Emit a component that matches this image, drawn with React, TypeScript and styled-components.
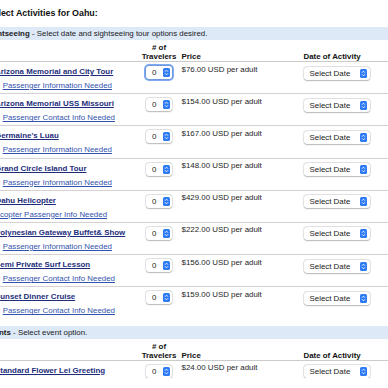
import React from "react";
import styled, { createGlobalStyle, css } from "styled-components";

const GlobalStyle = createGlobalStyle`
  html, body {
    margin: 0;
    padding: 0;
    background: #ffffff;
    overflow: hidden;
  }
  body {
    font-family: "Liberation Sans", Arial, Helvetica, sans-serif;
    color: #1a1a1a;
  }
`;

const Page = styled.div`
  margin-left: -16px;
  width: 440px;
`;

const Heading = styled.h1`
  margin: 0;
  padding: 8px 0 8px 3.6px;
  font-size: 8.9px;
  line-height: 11px;
  font-weight: 700;
  color: #111;
`;

const Section = styled.section`
  & + & {
    margin-top: 7.4px;
  }
`;

const Bar = styled.div`
  height: 13px;
  line-height: 13px;
  padding-left: 1px;
  background-color: #dee9f8;
  font-size: 7.9px;
  color: #1a1a1a;

  b {
    font-weight: 700;
  }
`;

const Grid = styled.div`
  display: grid;
  grid-template-columns: 157px 36px 123px 1fr;
`;

const HeaderRow = styled(Grid)`
  height: 21px;
  align-items: end;
  border-bottom: 1px solid #cbcbcb;
  font-size: 7.9px;
  font-weight: 700;
  line-height: 9px;
  color: #111;
`;

const HeadCell = styled.div<{ $center?: boolean; $pad?: number }>`
  text-align: ${(p) => (p.$center ? "center" : "left")};
  padding-left: ${(p) => p.$pad ?? 0}px;
  white-space: nowrap;
`;

const Row = styled(Grid)`
  border-bottom: 1px solid #d2d2d2;
  font-size: 7.9px;

  &:last-child {
    border-bottom: none;
  }
`;

const TitleCell = styled.div`
  padding: 5px 0 2.2px 11px;
  display: flex;
  flex-direction: column;
  align-items: flex-start;
  white-space: nowrap;
`;

const TitleLink = styled.a`
  font-weight: 700;
  line-height: 10px;
  color: #1d2d7c;
  text-decoration: underline;
`;

const SubLink = styled.a<{ $indent: number }>`
  margin-top: 4px;
  margin-left: ${(p) => p.$indent}px;
  line-height: 10px;
  color: #3253ad;
  text-decoration: underline;
`;

const TravelCell = styled.div`
  display: flex;
  justify-content: center;
  align-items: flex-start;
  padding-top: 4px;
`;

const PriceCell = styled.div`
  padding: 2.5px 0 0 4.5px;
  line-height: 10px;
  color: #1e1e1e;
  white-space: nowrap;
`;

const DateCell = styled.div`
  padding: 4.5px 0 0 3.5px;
`;

const SelectBox = styled.div<{ $width: number; $focused?: boolean }>`
  display: flex;
  align-items: center;
  justify-content: space-between;
  box-sizing: border-box;
  width: ${(p) => p.$width}px;
  height: 13px;
  padding: 0 2.5px 0 6px;
  background: #ffffff;
  border-radius: 3px;
  box-shadow: 0 0 0 0.5px rgba(0, 0, 0, 0.16), 0 0.5px 1.5px rgba(0, 0, 0, 0.22);
  font-size: 7.9px;
  color: #222;
  white-space: nowrap;

  ${(p) =>
    p.$focused &&
    css`
      box-shadow: 0 0 0 0.5px rgba(0, 0, 0, 0.2), 0 0 0 2px #7eaaf3;
    `}
`;

const Stepper = () => (
  <svg width="7" height="9" viewBox="0 0 7 9">
    <rect width="7" height="9" rx="1.6" fill="#2f7bf5" />
    <path d="M2 3.7 L3.5 2.2 L5 3.7" stroke="#fff" strokeWidth="0.9" fill="none" />
    <path d="M2 5.3 L3.5 6.8 L5 5.3" stroke="#fff" strokeWidth="0.9" fill="none" />
  </svg>
);

interface Activity {
  title: string;
  sub?: string;
  indent?: number;
  price: string;
  focused?: boolean;
}

const tours: Activity[] = [
  { title: "Arizona Memorial and City Tour", sub: "Passenger Information Needed", price: "$76.00", focused: true },
  { title: "Arizona Memorial USS Missouri", sub: "Passenger Contact Info Needed", price: "$154.00" },
  { title: "Germaine's Luau", sub: "Passenger Information Needed", price: "$167.00" },
  { title: "Grand Circle Island Tour", sub: "Passenger Information Needed", price: "$148.00" },
  { title: "Oahu Helicopter", sub: "Helicopter Passenger Info Needed", indent: -8.6, price: "$429.00" },
  { title: "Polynesian Gateway Buffet& Show", sub: "Passenger Information Needed", price: "$222.00" },
  { title: "Semi Private Surf Lesson", sub: "Passenger Contact Info Needed", price: "$156.00" },
  { title: "Sunset Dinner Cruise", sub: "Passenger Contact Info Needed", price: "$159.00" },
];

const events: Activity[] = [
  { title: "Standard Flower Lei Greeting", price: "$24.00" },
];

const ActivityRow = ({ item }: { item: Activity }) => (
  <Row>
    <TitleCell>
      <TitleLink>{item.title}</TitleLink>
      {item.sub && <SubLink $indent={item.indent ?? 7.7}>{item.sub}</SubLink>}
    </TitleCell>
    <TravelCell>
      <SelectBox $width={26} $focused={item.focused}>
        <span>0</span>
        <Stepper />
      </SelectBox>
    </TravelCell>
    <PriceCell>{item.price} USD per adult</PriceCell>
    <DateCell>
      <SelectBox $width={66}>
        <span>Select Date</span>
        <Stepper />
      </SelectBox>
    </DateCell>
  </Row>
);

const TableHeader = () => (
  <HeaderRow>
    <HeadCell />
    <HeadCell $center>
      # of
      <br />
      Travelers
    </HeadCell>
    <HeadCell $pad={4.5}>Price</HeadCell>
    <HeadCell $pad={3.5}>Date of Activity</HeadCell>
  </HeaderRow>
);

export default function App() {
  return (
    <Page>
      <GlobalStyle />
      <Heading>Select Activities for Oahu:</Heading>
      <Section>
        <Bar>
          <b>Sightseeing</b> - Select date and sightseeing tour options desired.
        </Bar>
        <TableHeader />
        {tours.map((t, i) => (
          <ActivityRow item={t} key={i} />
        ))}
      </Section>
      <Section>
        <Bar>
          <b>Events</b> - Select event option.
        </Bar>
        <TableHeader />
        {events.map((t, i) => (
          <ActivityRow item={t} key={i} />
        ))}
      </Section>
    </Page>
  );
}
